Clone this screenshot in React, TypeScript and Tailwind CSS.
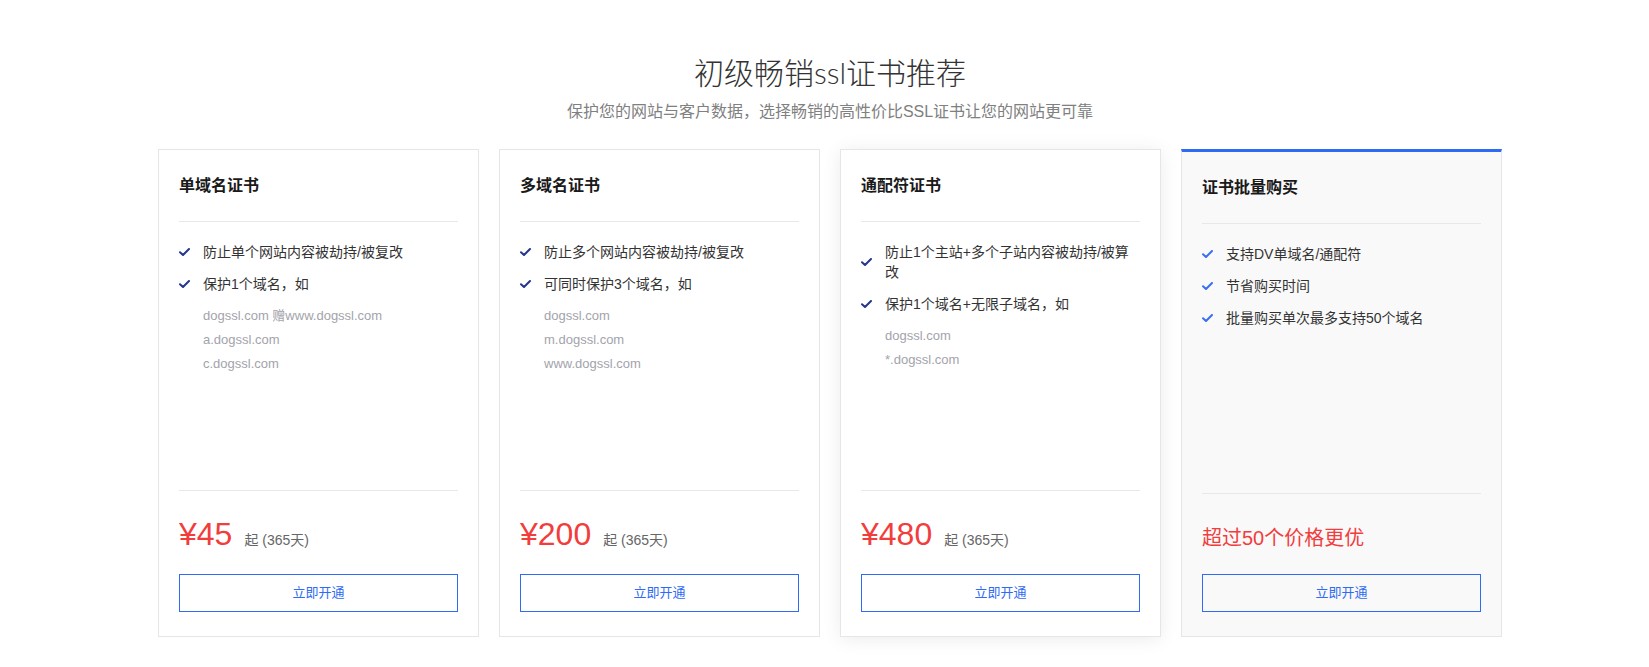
import React from "react";

type Plan = {
  name: string;
  features: string[];
  domains: string[];
  price?: string;
  note?: string;
  active?: boolean;
  hover?: boolean;
};

const plans: Plan[] = [
  {
    name: "单域名证书",
    features: ["防止单个网站内容被劫持/被复改", "保护1个域名，如"],
    domains: ["dogssl.com 赠www.dogssl.com", "a.dogssl.com", "c.dogssl.com"],
    price: "¥45",
  },
  {
    name: "多域名证书",
    features: ["防止多个网站内容被劫持/被复改", "可同时保护3个域名，如"],
    domains: ["dogssl.com", "m.dogssl.com", "www.dogssl.com"],
    price: "¥200",
  },
  {
    name: "通配符证书",
    features: ["防止1个主站+多个子站内容被劫持/被算改", "保护1个域名+无限子域名，如"],
    domains: ["dogssl.com", "*.dogssl.com"],
    price: "¥480",
    hover: true,
  },
  {
    name: "证书批量购买",
    features: ["支持DV单域名/通配符", "节省购买时间", "批量购买单次最多支持50个域名"],
    domains: [],
    note: "超过50个价格更优",
    active: true,
  },
];

const CheckMark = ({ light }: { light?: boolean }) => (
  <svg width="11" height="8" viewBox="0 0 11 8" fill="none" className="shrink-0">
    <path
      d="M1 4.2 L4 7 L10 1"
      stroke={light ? "#3a6ff0" : "#25378c"}
      strokeWidth="2"
      strokeLinecap="round"
      strokeLinejoin="round"
    />
  </svg>
);

const Card = ({ plan }: { plan: Plan }) => (
  <div
    className={`w-[321px] h-[488px] flex flex-col px-5 border border-[#e6e6e6] ${
      plan.active ? "bg-[#f9f9f9] border-t-[3px] border-t-[#2d6bf6]" : "bg-white"
    } ${plan.hover ? "shadow-[0_2px_18px_rgba(0,0,0,0.08)]" : ""}`}
  >
    <div className="h-[72px] shrink-0 flex items-center border-b border-[#e8e8e8]">
      <h3 className="text-[16px] font-bold text-[#1a1a1a]">{plan.name}</h3>
    </div>

    <ul className="pt-5 flex flex-col gap-3">
      {plan.features.map((f, i) => (
        <li key={i}>
          <div className="flex items-center">
            <span className="w-6 flex">
              <CheckMark light={plan.active} />
            </span>
            <p className="flex-1 text-[14px] leading-5 text-[#333]">{f}</p>
          </div>
          {i === 1 && plan.domains.length > 0 && (
            <div className="pl-6 mt-[10px]">
              {plan.domains.map((d) => (
                <p key={d} className="text-[13px] leading-6 text-[#a3a3ab]">
                  {d}
                </p>
              ))}
            </div>
          )}
        </li>
      ))}
    </ul>

    <div className="mt-auto border-t border-[#e8e8e8] pb-6">
      {plan.price ? (
        <div className="pt-[23px] h-[63px] flex items-baseline">
          <span className="text-[32px] leading-10 text-[#f23d3d]">{plan.price}</span>
          <span className="ml-3 text-[14px] text-[#666]">起 (365天)</span>
        </div>
      ) : (
        <div className="pt-5 h-[60px] flex items-end">
          <span className="text-[20px] leading-8 text-[#f23d3d]">{plan.note}</span>
        </div>
      )}
      <button className="mt-5 w-full h-[38px] border border-[#2f6bf5] bg-transparent text-[13px] text-[#2f6bf5]">
        立即开通
      </button>
    </div>
  </div>
);

export default function App() {
  return (
    <div
      className="w-full h-[667px] bg-white"
      style={{ fontFamily: '"Liberation Sans", "Noto Sans CJK SC", sans-serif' }}
    >
      <div className="w-[1355px] mx-auto pl-[11px] pt-[52px]">
        <div className="text-center">
          <h2
            className="text-[30px] leading-10 font-light text-[#333]"
            style={{ fontFamily: 'Lato, "Noto Sans CJK SC", sans-serif' }}
          >
            初级畅销ssl证书推荐
          </h2>
          <p className="mt-[8px] text-[16px] leading-6 text-[#808080]">
            保护您的网站与客户数据，选择畅销的高性价比SSL证书让您的网站更可靠
          </p>
        </div>
        <div className="mt-[25px] flex gap-5">
          {plans.map((p) => (
            <Card key={p.name} plan={p} />
          ))}
        </div>
      </div>
    </div>
  );
}
